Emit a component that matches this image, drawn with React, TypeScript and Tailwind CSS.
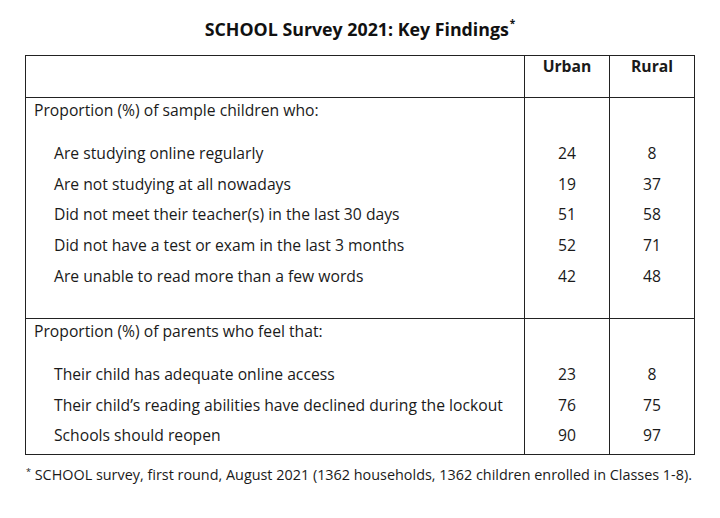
import React from "react";

type Row = { label: string; urban: number; rural: number };

const children: Row[] = [
  { label: "Are studying online regularly", urban: 24, rural: 8 },
  { label: "Are not studying at all nowadays", urban: 19, rural: 37 },
  { label: "Did not meet their teacher(s) in the last 30 days", urban: 51, rural: 58 },
  { label: "Did not have a test or exam in the last 3 months", urban: 52, rural: 71 },
  { label: "Are unable to read more than a few words", urban: 42, rural: 48 },
];

const parents: Row[] = [
  { label: "Their child has adequate online access", urban: 23, rural: 8 },
  { label: "Their child\u2019s reading abilities have declined during the lockout", urban: 76, rural: 75 },
  { label: "Schools should reopen", urban: 90, rural: 97 },
];

function Section({ title, rows, bottomPad }: { title: string; rows: Row[]; bottomPad: string }) {
  return (
    <div className="flex border-t border-[#222]">
      <div className="w-[498px] pl-[8px]">
        <div className="flex h-[24px] items-center">{title}</div>
        <div className="h-[16px]" />
        {rows.map((r) => (
          <div key={r.label} className="flex h-[30.6px] items-center pl-[20px]">
            {r.label}
          </div>
        ))}
        <div className={bottomPad} />
      </div>
      <div className="w-[85px] border-l border-[#222]">
        <div className="h-[40px]" />
        {rows.map((r) => (
          <div key={r.label} className="flex h-[30.6px] items-center justify-center">
            {r.urban}
          </div>
        ))}
      </div>
      <div className="w-[85px] border-l border-[#222]">
        <div className="h-[40px]" />
        {rows.map((r) => (
          <div key={r.label} className="flex h-[30.6px] items-center justify-center">
            {r.rural}
          </div>
        ))}
      </div>
    </div>
  );
}

export default function App() {
  return (
    <div className="h-[518px] w-[720px] bg-white text-[15.7px] leading-[20px] text-[#1a1a1a] [font-family:'Open_Sans','Liberation_Sans',sans-serif]">
      <div className="flex h-[55px] items-start justify-center pt-[17px]">
        <h1 className="text-[17.8px] font-bold leading-[24px] text-[#111]">
          SCHOOL Survey 2021: Key Findings
          <span className="relative -top-[9px] ml-[1px] text-[10px]">*</span>
        </h1>
      </div>
      <div className="ml-[25px] w-[670px] border border-[#222]">
        <div className="flex h-[41px] font-bold">
          <div className="w-[498px]" />
          <div className="flex w-[85px] items-start justify-center border-l border-[#222]">Urban</div>
          <div className="flex w-[85px] items-start justify-center border-l border-[#222]">Rural</div>
        </div>
        <Section title="Proportion (%) of sample children who:" rows={children} bottomPad="h-[27px]" />
        <Section title="Proportion (%) of parents who feel that:" rows={parents} bottomPad="h-[3px]" />
      </div>
      <div className="ml-[26px] mt-[10px] text-[14.4px]">
        <span className="relative -top-[5px] text-[9px]">*</span> SCHOOL survey, first round, August 2021 (1362 households, 1362 children enrolled in Classes 1-8).
      </div>
    </div>
  );
}
